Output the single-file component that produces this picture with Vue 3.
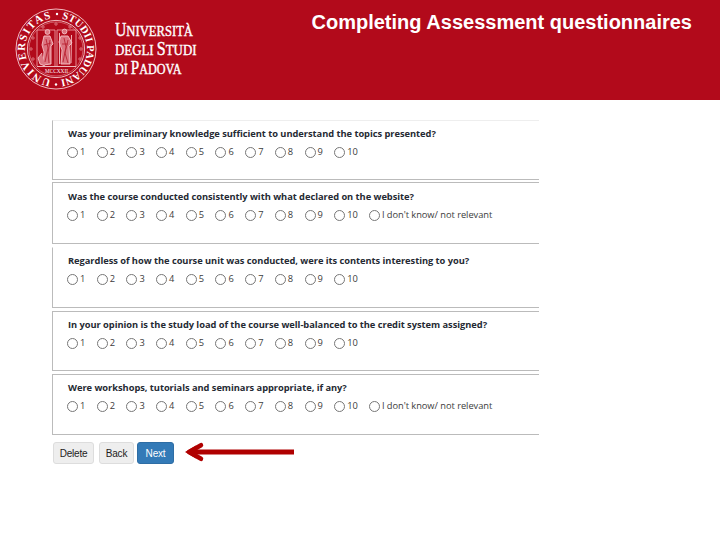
<template>
  <div class="page">
    <header class="header">
      <svg class="seal" width="84" height="84" viewBox="-42 -42 84 84">
        <defs>
          <path id="ring" d="M 0 31 A 31 31 0 0 1 0 -31 A 31 31 0 0 1 0 31" />
        </defs>
        <circle r="40" class="line" />
        <circle r="28.6" class="line" />
        <circle r="27" class="line thin" />
        <text class="ring-text">
          <textPath href="#ring" startOffset="5" textLength="87" lengthAdjust="spacing">UNIVERSITAS</textPath>
        </text>
        <text class="ring-text narrow">
          <textPath href="#ring" startOffset="103" textLength="87" lengthAdjust="spacing">STUDII PADUANI</textPath>
        </text>
        <circle cx="1" cy="-35" r="1.2" class="dot" />
        <circle cx="0" cy="35.5" r="1.2" class="dot" />
        <circle v-for="(s, i) in stars" :key="i" :cx="s[0]" :cy="s[1]" r="1.2" class="line star" />
        <path class="line panel" d="M-19 17 V-19 H-1 V17 M1 17 V-19 H20 V17" />
        <path class="line" d="M-19 17.5 H20" />
        <!-- left figure -->
        <g class="figure">
          <circle cx="-8.5" cy="-17" r="2.4" />
          <path d="M-12 -13 L-6 -13 L-3 -5 L-5 -3 L-5 15 L-13 16 L-12 3 L-14 -4 Z" />
          <path d="M-14 4 L-18 9 L-16 15 L-11 17" />
          <path class="fold" d="M-10 -10 L-8 -1 L-11 13 M-6 -9 L-8 4 L-7 14 M-12 -4 L-5 -6" />
        </g>
        <!-- right figure -->
        <g class="figure">
          <circle cx="8.5" cy="-17.5" r="2.4" />
          <path d="M5 -13 L12 -13 L16 -6 L13 -3 L14 15 L5 15 L6 1 L3 -7 Z" />
          <path class="staff" d="M3.5 -16 V15 M15.5 -14 L15 14" />
          <path class="fold" d="M8 -11 L10 -2 L7 13 M12 -9 L9 4 L12 14 M6 -5 L12 -5" />
        </g>
        <text class="year" x="-11" y="24.3" textLength="23" lengthAdjust="spacingAndGlyphs">MCCXXII</text>
      </svg>
      <svg class="wordmark" width="90" height="60" viewBox="0 0 90 60">
        <text x="0" y="17" textLength="78" lengthAdjust="spacingAndGlyphs">U<tspan class="sc">NIVERSITÀ</tspan></text>
        <text x="0" y="36" textLength="81.5" lengthAdjust="spacingAndGlyphs"><tspan class="sc">DEGLI </tspan>S<tspan class="sc">TUDI</tspan></text>
        <text x="0" y="55" textLength="66.5" lengthAdjust="spacingAndGlyphs"><tspan class="sc">DI </tspan>P<tspan class="sc">ADOVA</tspan></text>
      </svg>
      <h1 class="title">Completing Assessment questionnaires</h1>
    </header>

    <main class="survey">
      <section
        v-for="(q, i) in questions"
        :key="i"
        class="question"
        :class="'question-' + (i + 1)"
      >
        <p class="question-text">{{ q.text }}</p>
        <div class="options">
          <label v-for="n in 10" :key="n" class="option">
            <span class="radio"></span><span class="num">{{ n }}</span>
          </label>
          <label v-if="q.optional" class="option unknown">
            <span class="radio"></span><span class="num">I don't know/ not relevant</span>
          </label>
        </div>
      </section>

      <div class="actions">
        <button class="btn">Delete</button>
        <button class="btn back">Back</button>
        <button class="btn primary">Next</button>
        <svg class="arrow" width="112" height="20" viewBox="0 0 112 20">
          <path d="M110 10 H8" />
          <path class="head" d="M17 3.2 L5 10 L17 16.8" />
          <path class="tip" d="M1 10 L12 3.5 V16.5 Z" />
        </svg>
      </div>
    </main>
  </div>
</template>

<script setup>
const questions = [
  { text: 'Was your preliminary knowledge sufficient to understand the topics presented?' },
  { text: 'Was the course conducted consistently with what declared on the website?', optional: true },
  { text: 'Regardless of how the course unit was conducted, were its contents interesting to you?' },
  { text: 'In your opinion is the study load of the course well-balanced to the credit system assigned?' },
  { text: 'Were workshops, tutorials and seminars appropriate, if any?', optional: true }
]

const stars = [
  [0, -25], [-13, -22], [14, -22], [-23, -11], [24, -11],
  [-25, 0], [25, 0], [-23, 10], [24, 10]
]
</script>

<style>
body {
  margin: 0;
  background: #fff;
}
</style>

<style scoped>
.page {
  width: 720px;
  height: 540px;
  overflow: hidden;
  background: #fff;
  font-family: "Open Sans", "Noto Sans", sans-serif;
}

.header {
  display: flex;
  align-items: flex-start;
  box-sizing: border-box;
  height: 100px;
  padding: 7px 28px 0 14px;
  background: #b20a1b;
}

.wordmark {
  margin: 12px 0 0 17px;
  fill: #fff;
  font-family: "Liberation Serif", serif;
  font-size: 18px;
  stroke: #fff;
  stroke-width: 0.4;
}

.sc {
  font-size: 14.5px;
}

.line {
  fill: none;
  stroke: #f7cdd0;
  stroke-width: 0.9;
}

.thin {
  stroke-width: 0.4;
}

.star {
  stroke: #e58b93;
  stroke-width: 0.8;
}

.panel {
  stroke: #ec9aa1;
}

.dot {
  fill: #fff;
}

.ring-text {
  fill: #fff;
  font-family: "Liberation Serif", serif;
  font-size: 11px;
  font-weight: bold;
}

.narrow {
  font-size: 10.5px;
}

.year {
  fill: #fff;
  font-family: "Liberation Serif", serif;
  font-size: 6px;
}

.figure {
  fill: #dc7580;
  stroke: #f5c3c7;
  stroke-width: 0.9;
}

.fold {
  fill: none;
  stroke: #b92332;
}

.staff {
  fill: none;
}

.title {
  margin: 4px 0 0 auto;
  color: #fff;
  font-family: "Liberation Sans", Arial, sans-serif;
  font-size: 20px;
  line-height: 23px;
  font-weight: bold;
  white-space: nowrap;
}

.survey {
  width: 487px;
  padding: 20px 0 0 52px;
}

.question {
  box-sizing: border-box;
  height: 60px;
  margin-bottom: 3px;
  padding: 6px 0 0 15px;
  border: solid #bbb;
  border-width: 1px 0 1px 1px;
}

.question-1 {
  border-top-color: #eee;
  margin-bottom: 2px;
}

.question-2 {
  height: 62px;
  padding-top: 7px;
}

.question-3 {
  height: 61px;
  border-top-color: transparent;
}

.question-4 {
  height: 60px;
}

.question-5 {
  height: 61px;
  margin-bottom: 0;
}

.question-text {
  margin: 0;
  color: #252a33;
  font-size: 9.3px;
  line-height: 14px;
  font-weight: bold;
  letter-spacing: -0.035px;
  white-space: nowrap;
}

.options {
  display: flex;
  margin-top: 4px;
}

.option {
  display: flex;
  flex: none;
  width: 29.7px;
  height: 14px;
  color: #3c3c3c;
  font-size: 9.3px;
  line-height: 14px;
  white-space: nowrap;
}

.radio {
  box-sizing: border-box;
  flex: none;
  width: 11px;
  height: 11px;
  margin: 2px 1px 0 -1px;
  border: 1px solid #777;
  border-radius: 50%;
}

.option .num {
  margin-left: 1px;
}

.unknown {
  margin-left: 5px;
  letter-spacing: -0.04px;
}

.actions {
  display: flex;
  margin-top: 7px;
}

.btn {
  box-sizing: border-box;
  width: 41px;
  height: 22px;
  margin: 0 5px 0 1px;
  padding: 0;
  border: 1px solid #ddd;
  border-radius: 3px;
  background: #eee;
  color: #222;
  font-family: "Liberation Sans", Arial, sans-serif;
  font-size: 10px;
  letter-spacing: -0.2px;
}

.back {
  width: 35px;
  margin: 0 3px 0 0;
}

.primary {
  width: 37px;
  margin: 0 10px 0 0;
  border-color: #2e6da4;
  background: #337ab7;
  color: #fff;
}

.arrow {
  fill: none;
  stroke: #b00000;
  stroke-width: 5;
}

.head {
  stroke-width: 4.5;
  stroke-linecap: round;
  stroke-linejoin: round;
}

.tip {
  fill: #b00000;
  stroke: none;
}
</style>
